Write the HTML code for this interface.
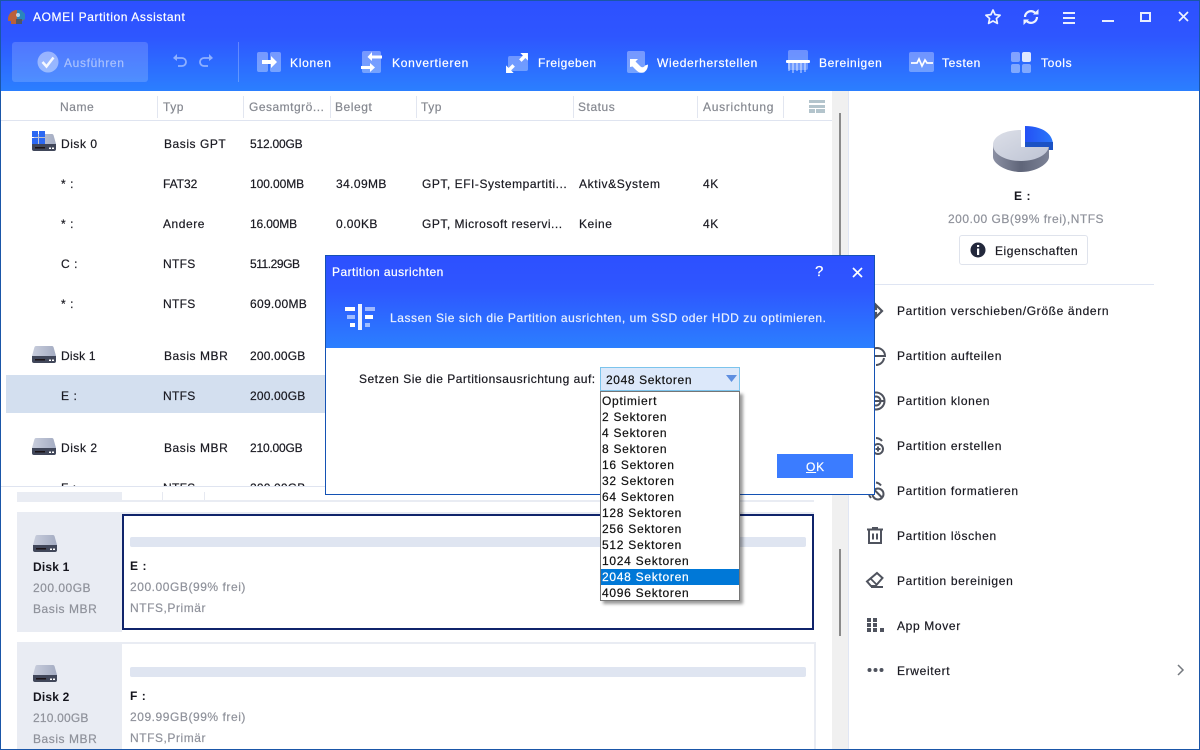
<!DOCTYPE html>
<html><head><meta charset="utf-8"><style>
html,body{margin:0;padding:0;width:1200px;height:750px;overflow:hidden;background:#fff}
*{box-sizing:border-box}
#r{position:relative;width:1200px;height:750px;overflow:hidden;font-family:"Liberation Sans",sans-serif;font-size:12px;color:#1a1a22;background:#fff}
.a{position:absolute}
.t{position:absolute;white-space:nowrap;line-height:16px;letter-spacing:.55px;-webkit-text-stroke:.2px}
.w{color:#fff}
.g{color:#8f929b}
.h{color:#858890}
.sep{position:absolute;top:96px;width:1px;height:22px;background:#e2e6f0}
.m{left:897px;letter-spacing:.65px}
.o{position:absolute;left:0;height:16px;width:138px;line-height:16px;padding-left:1px;white-space:nowrap;letter-spacing:.72px;color:#111;-webkit-text-stroke:.2px}
svg{position:absolute;overflow:visible}
</style></head><body><div id="r">

<div class="a" style="left:0;top:0;width:1200px;height:91px;background:linear-gradient(#2d50ff 0%,#2e56ff 40%,#2b7fff 100%)"></div>

<svg style="left:8px;top:9px" width="18" height="16" viewBox="0 0 18 16"><path d="M0 9C1 4 4 2 8 1h5l4 4v5l-4 3H8v2H3V12H0z" fill="#b9603a"/><path d="M9 1h4l4 4v5l-4 2H9z" fill="#2a86bd"/><path d="M8 10h6v5H8z" fill="#4d5766"/><circle cx="10" cy="6" r="2" fill="#cfeaf5" opacity=".8"/></svg>
<div class="t w" style="left:33px;top:9px;letter-spacing:.6px">AOMEI Partition Assistant</div>

<svg style="left:984px;top:8px" width="18" height="18" viewBox="0 0 18 18"><path d="M9 2l2.100 4.600 5 .6-3.700 3.300 1 4.900L9 13l-4.400 2.400 1-4.900L1.900 7.200l5-.6z" fill="none" stroke="#eef2ff" stroke-width="1.700" stroke-linejoin="round"/></svg>
<svg style="left:1022px;top:8px" width="18" height="18" viewBox="0 0 18 18"><path d="M3 9a6 6 0 0 1 10-4.300M15 9a6 6 0 0 1-10 4.300" fill="none" stroke="#eef2ff" stroke-width="2.200"/><path d="M11 6.500h5.500V1zM7 11.500H1.500V17z" fill="#eef2ff"/></svg>
<div class="a" style="left:1063px;top:12px;width:12px;height:2px;background:#e8edff"></div>
<div class="a" style="left:1063px;top:17px;width:12px;height:2px;background:#e8edff"></div>
<div class="a" style="left:1063px;top:22px;width:12px;height:2px;background:#e8edff"></div>
<div class="a" style="left:1102px;top:20px;width:12px;height:2px;background:#e8edff"></div>
<div class="a" style="left:1140px;top:12px;width:11px;height:10px;border:2px solid #e8edff"></div>
<svg style="left:1178px;top:11px" width="11" height="11" viewBox="0 0 11 11"><path d="M1 1l9 9M10 1l-9 9" stroke="#eef2ff" stroke-width="1.700"/></svg>

<div class="a" style="left:12px;top:42px;width:136px;height:40px;border-radius:3px;background:rgba(255,255,255,.17)"></div>
<svg style="left:37px;top:51px" width="22" height="22" viewBox="0 0 22 22"><circle cx="11" cy="11" r="10.500" fill="#fff" opacity=".42"/><path d="M5.500 11l4 4.500 7-9" fill="none" stroke="#fff" stroke-opacity=".9" stroke-width="2.500"/></svg>
<div class="t" style="left:64px;top:55px;color:#a9c1fd;letter-spacing:.65px">Ausführen</div>
<svg style="left:172px;top:54px" width="16" height="14" viewBox="0 0 16 14"><path d="M4 4h6a4 4 0 0 1 0 8H6" fill="none" stroke="#8fb0ff" stroke-width="1.800"/><path d="M5 0v7L1 4z" fill="#8fb0ff"/></svg>
<svg style="left:198px;top:54px" width="16" height="14" viewBox="0 0 16 14"><path d="M12 4H6a4 4 0 0 0 0 8h4" fill="none" stroke="#8fb0ff" stroke-width="1.800"/><path d="M11 0v7l4-3z" fill="#8fb0ff"/></svg>
<div class="a" style="left:238px;top:42px;width:1px;height:40px;background:rgba(255,255,255,.25)"></div>

<!-- Klonen -->
<div class="a" style="left:257px;top:52px;width:11px;height:20px;border-radius:2px;background:rgba(255,255,255,.35)"></div>
<div class="a" style="left:270px;top:52px;width:11px;height:20px;border-radius:2px;background:rgba(255,255,255,.35)"></div>
<svg style="left:262px;top:56px" width="16" height="12" viewBox="0 0 16 12"><path d="M0 4h9V0l6 6-6 6V8H0z" fill="#fff"/></svg>
<div class="t w" style="left:290px;top:55px;letter-spacing:.7px">Klonen</div>
<!-- Konvertieren -->
<div class="a" style="left:362px;top:51px;width:19px;height:22px;border-radius:2px;background:rgba(255,255,255,.35)"></div>
<svg style="left:361px;top:51px" width="21" height="22" viewBox="0 0 21 22"><path d="M21 4.500H11V1L6.500 6 11 10V7.500h10zM0 15h9v-3l5 4.500L9 21v-3H0z" fill="#fff"/></svg>
<div class="t w" style="left:392px;top:55px;letter-spacing:.75px">Konvertieren</div>
<!-- Freigeben -->
<div class="a" style="left:508px;top:56px;width:20px;height:15px;border-radius:2px;background:rgba(255,255,255,.32)"></div>
<svg style="left:506px;top:53px" width="22" height="20" viewBox="0 0 23 21"><path d="M23 0v8l-2.700-2.700-4 4-2.600-2.600 4-4L15 0zM0 21v-8l2.700 2.700 4-4 2.600 2.600-4 4L8 21z" fill="#fff"/></svg>
<div class="t w" style="left:538px;top:55px;letter-spacing:.5px">Freigeben</div>
<!-- Wiederherstellen -->
<div class="a" style="left:627px;top:51px;width:18px;height:22px;border-radius:2px;background:rgba(255,255,255,.35)"></div>
<svg style="left:629px;top:58px" width="20" height="16" viewBox="0 0 20 16"><path d="M1 1h8L6.500 3.500 11 8c2 2 4 1.500 5-.5l3-1c0 5-3 9-8 8-2-.4-3-1.500-7.500-6L1 9z" fill="#fff"/></svg>
<div class="t w" style="left:657px;top:55px;letter-spacing:.68px">Wiederherstellen</div>
<!-- Bereinigen -->
<div class="a" style="left:788px;top:50px;width:20px;height:20px;border-radius:2px;background:rgba(255,255,255,.3)"></div>
<div class="a" style="left:786px;top:60px;width:24px;height:3px;border-radius:1px;background:#fff"></div>
<svg style="left:788px;top:63px" width="20" height="11" viewBox="0 0 20 11"><path d="M1 0v8M5 0v10M9 0v8M13 0v10M17 0v9" stroke="#fff" stroke-opacity=".5" stroke-width="1.500"/></svg>
<div class="t w" style="left:819px;top:55px;letter-spacing:.6px">Bereinigen</div>
<!-- Testen -->
<div class="a" style="left:909px;top:52px;width:25px;height:20px;border-radius:2px;background:rgba(255,255,255,.32)"></div>
<svg style="left:911px;top:55px" width="22" height="14" viewBox="0 0 22 14"><path d="M0 8h6l2-4 3 7 3-6 2 3h6" fill="none" stroke="#fff" stroke-width="1.700"/></svg>
<div class="t w" style="left:942px;top:55px;letter-spacing:.6px">Testen</div>
<!-- Tools -->
<div class="a" style="left:1011px;top:52px;width:9px;height:10px;border-radius:2px;background:rgba(255,255,255,.4)"></div>
<div class="a" style="left:1022px;top:52px;width:9px;height:10px;border-radius:2px;background:rgba(255,255,255,.85)"></div>
<div class="a" style="left:1011px;top:64px;width:9px;height:9px;border-radius:2px;background:rgba(255,255,255,.4)"></div>
<div class="a" style="left:1022px;top:64px;width:9px;height:9px;border-radius:2px;background:rgba(255,255,255,.4)"></div>
<div class="t w" style="left:1041px;top:55px;letter-spacing:.65px">Tools</div>

<!-- table header -->
<div class="t h" style="left:60px;top:99px">Name</div>
<div class="sep" style="left:157px"></div><div class="t h" style="left:163px;top:99px">Typ</div>
<div class="sep" style="left:243px"></div><div class="t h" style="left:249px;top:99px;letter-spacing:.5px">Gesamtgrö...</div>
<div class="sep" style="left:330px"></div><div class="t h" style="left:335px;top:99px">Belegt</div>
<div class="sep" style="left:416px"></div><div class="t h" style="left:421px;top:99px">Typ</div>
<div class="sep" style="left:573px"></div><div class="t h" style="left:578px;top:99px">Status</div>
<div class="sep" style="left:697px"></div><div class="t h" style="left:703px;top:99px;letter-spacing:.7px">Ausrichtung</div>
<div class="sep" style="left:783px"></div>
<div class="a" style="left:809px;top:100px;width:16px;height:3px;background:#b3c4cc"></div>
<div class="a" style="left:809px;top:105px;width:16px;height:3px;background:#b3c4cc"></div>
<div class="a" style="left:809px;top:109px;width:6px;height:4px;background:#b3c4cc"></div>
<div class="a" style="left:816px;top:109px;width:9px;height:4px;background:#b3c4cc"></div>
<div class="a" style="left:1px;top:120px;width:831px;height:1px;background:#dfe4f0"></div>

<!-- scrollbar + right -->
<div class="a" style="left:832px;top:91px;width:16px;height:659px;background:#f0f0f0"></div>
<div class="a" style="left:839px;top:113px;width:2px;height:375px;background:#8a8a8a"></div>
<div class="a" style="left:839px;top:549px;width:2px;height:87px;background:#8a8a8a"></div>
<div class="a" style="left:848px;top:91px;width:1px;height:659px;background:#e0e6f4"></div>

<!-- selected row -->
<div class="a" style="left:6px;top:375px;width:826px;height:38px;background:#d3dfef"></div>

<!-- disk icons -->
<svg style="left:32px;top:134px" width="24" height="17" viewBox="0 0 24 17"><defs><linearGradient id="d" x1="0" y1="0" x2="1" y2="0"><stop offset="0" stop-color="#c9cedd"/><stop offset="1" stop-color="#a4acc2"/></linearGradient></defs><path d="M4 0h16q1 0 1.500 1L24 10v2H0v-2L2.500 1Q3 0 4 0z" fill="url(#d)"/><path d="M0 10h24v5q0 2-2 2H2q-2 0-2-2z" fill="#41475a"/><path d="M3 13h10v1.500H3z" fill="#1c1418"/><path d="M17 13.500h2v1.500h-2zM20 13.500h2v1.500h-2z" fill="#fff"/></svg>
<div class="a" style="left:32px;top:131px;width:6px;height:6px;background:#2c68f2"></div>
<div class="a" style="left:39px;top:131px;width:6px;height:6px;background:#2c68f2"></div>
<div class="a" style="left:32px;top:138px;width:6px;height:6px;background:#2c68f2"></div>
<div class="a" style="left:39px;top:138px;width:6px;height:6px;background:#2c68f2"></div>
<svg style="left:32px;top:346px" width="24" height="17" viewBox="0 0 24 17"><path d="M4 0h16q1 0 1.500 1L24 10v2H0v-2L2.500 1Q3 0 4 0z" fill="url(#d)"/><path d="M0 10h24v5q0 2-2 2H2q-2 0-2-2z" fill="#41475a"/><path d="M3 13h10v1.500H3z" fill="#1c1418"/><path d="M17 13.500h2v1.500h-2zM20 13.500h2v1.500h-2z" fill="#fff"/></svg>
<svg style="left:32px;top:438px" width="24" height="17" viewBox="0 0 24 17"><path d="M4 0h16q1 0 1.500 1L24 10v2H0v-2L2.500 1Q3 0 4 0z" fill="url(#d)"/><path d="M0 10h24v5q0 2-2 2H2q-2 0-2-2z" fill="#41475a"/><path d="M3 13h10v1.500H3z" fill="#1c1418"/><path d="M17 13.500h2v1.500h-2zM20 13.500h2v1.500h-2z" fill="#fff"/></svg>

<!-- rows -->
<div class="t" style="left:61px;top:136px">Disk 0</div><div class="t" style="left:164px;top:136px">Basis GPT</div><div class="t" style="left:250px;top:136px;letter-spacing:-.2px">512.00GB</div>
<div class="t" style="left:61px;top:176px">* :</div><div class="t" style="left:163px;top:176px;letter-spacing:-.05px">FAT32</div><div class="t" style="left:250px;top:176px;letter-spacing:-.08px">100.00MB</div><div class="t" style="left:336px;top:176px;letter-spacing:.4px">34.09MB</div><div class="t" style="left:422px;top:176px;letter-spacing:.53px">GPT, EFI-Systempartiti...</div><div class="t" style="left:579px;top:176px;letter-spacing:.63px">Aktiv&amp;System</div><div class="t" style="left:703px;top:176px">4K</div>
<div class="t" style="left:61px;top:216px">* :</div><div class="t" style="left:163px;top:216px">Andere</div><div class="t" style="left:250px;top:216px;letter-spacing:-.15px">16.00MB</div><div class="t" style="left:336px;top:216px;letter-spacing:.4px">0.00KB</div><div class="t" style="left:422px;top:216px;letter-spacing:.5px">GPT, Microsoft reservi...</div><div class="t" style="left:579px;top:216px">Keine</div><div class="t" style="left:703px;top:216px">4K</div>
<div class="t" style="left:61px;top:256px">C :</div><div class="t" style="left:163px;top:256px;letter-spacing:.3px">NTFS</div><div class="t" style="left:250px;top:256px;letter-spacing:-.45px">511.29GB</div>
<div class="t" style="left:61px;top:296px">* :</div><div class="t" style="left:163px;top:296px;letter-spacing:.3px">NTFS</div><div class="t" style="left:250px;top:296px;letter-spacing:.3px">609.00MB</div>
<div class="t" style="left:61px;top:348px;letter-spacing:.25px">Disk 1</div><div class="t" style="left:164px;top:348px">Basis MBR</div><div class="t" style="left:250px;top:348px;letter-spacing:.17px">200.00GB</div>
<div class="t" style="left:61px;top:388px">E :</div><div class="t" style="left:163px;top:388px;letter-spacing:.3px">NTFS</div><div class="t" style="left:250px;top:388px;letter-spacing:.17px">200.00GB</div>
<div class="t" style="left:61px;top:440px">Disk 2</div><div class="t" style="left:164px;top:440px">Basis MBR</div><div class="t" style="left:250px;top:440px;letter-spacing:-.2px">210.00GB</div>
<div class="t" style="left:61px;top:480px">F :</div><div class="t" style="left:163px;top:480px;letter-spacing:.3px">NTFS</div><div class="t" style="left:250px;top:480px;letter-spacing:.17px">200.00GB</div>

<!-- lower pane -->
<div class="a" style="left:1px;top:486px;width:831px;height:264px;background:#fff;border-top:1px solid #dfe4f0"></div>
<div class="a" style="left:17px;top:492px;width:105px;height:8px;background:#e9ecf3"></div>
<div class="a" style="left:17px;top:500px;width:797px;height:2px;background:#e9ecf3"></div>
<div class="a" style="left:162px;top:492px;width:1px;height:8px;background:#e6e9f1"></div>
<div class="a" style="left:204px;top:492px;width:1px;height:8px;background:#e6e9f1"></div>
<div class="a" style="left:17px;top:512px;width:105px;height:120px;background:#e9ecf3"></div>
<div class="a" style="left:122px;top:514px;width:692px;height:116px;border:2px solid #10246b;background:#fff"></div>
<div class="a" style="left:122px;top:512px;width:692px;height:2px;background:#e9ecf3"></div>
<div class="a" style="left:130px;top:537px;width:676px;height:10px;border-radius:2px;background:#dfe5f1"></div>
<svg style="left:33px;top:535px" width="24" height="17" viewBox="0 0 24 17"><path d="M4 0h16q1 0 1.500 1L24 10v2H0v-2L2.500 1Q3 0 4 0z" fill="url(#d)"/><path d="M0 10h24v5q0 2-2 2H2q-2 0-2-2z" fill="#41475a"/><path d="M3 13h10v1.500H3z" fill="#1c1418"/><path d="M17 13.500h2v1.500h-2zM20 13.500h2v1.500h-2z" fill="#fff"/></svg>
<div class="t" style="left:33px;top:559px;font-weight:bold;color:#14141c;letter-spacing:.2px;-webkit-text-stroke:0">Disk 1</div>
<div class="t g" style="left:33px;top:580px;letter-spacing:.5px">200.00GB</div>
<div class="t g" style="left:33px;top:601px">Basis MBR</div>
<div class="t" style="left:130px;top:558px;font-weight:bold;color:#14141c;-webkit-text-stroke:0">E :</div>
<div class="t g" style="left:130px;top:579px">200.00GB(99% frei)</div>
<div class="t g" style="left:130px;top:600px">NTFS,Primär</div>

<div class="a" style="left:17px;top:642px;width:105px;height:108px;background:#e9ecf3"></div>
<div class="a" style="left:122px;top:642px;width:693px;height:2px;background:#e9ecf3"></div>
<div class="a" style="left:814px;top:642px;width:2px;height:108px;background:#e9ecf3"></div>
<div class="a" style="left:130px;top:667px;width:676px;height:10px;border-radius:2px;background:#dfe5f1"></div>
<svg style="left:33px;top:665px" width="24" height="17" viewBox="0 0 24 17"><path d="M4 0h16q1 0 1.500 1L24 10v2H0v-2L2.500 1Q3 0 4 0z" fill="url(#d)"/><path d="M0 10h24v5q0 2-2 2H2q-2 0-2-2z" fill="#41475a"/><path d="M3 13h10v1.500H3z" fill="#1c1418"/><path d="M17 13.500h2v1.500h-2zM20 13.500h2v1.500h-2z" fill="#fff"/></svg>
<div class="t" style="left:33px;top:689px;font-weight:bold;color:#14141c;letter-spacing:.2px;-webkit-text-stroke:0">Disk 2</div>
<div class="t g" style="left:33px;top:710px;letter-spacing:.2px">210.00GB</div>
<div class="t g" style="left:33px;top:731px">Basis MBR</div>
<div class="t" style="left:130px;top:688px;font-weight:bold;color:#14141c;-webkit-text-stroke:0">F :</div>
<div class="t g" style="left:130px;top:709px">209.99GB(99% frei)</div>
<div class="t g" style="left:130px;top:730px">NTFS,Primär</div>

<!-- right panel -->
<svg style="left:990px;top:124px" width="66" height="50" viewBox="0 0 66 50"><defs><linearGradient id="p" x1="0" y1="0" x2="1" y2="1"><stop offset="0" stop-color="#dcdfe8"/><stop offset="1" stop-color="#bec4d4"/></linearGradient><linearGradient id="b" x1="0" y1="0" x2="1" y2="0"><stop offset="0" stop-color="#2450f5"/><stop offset="1" stop-color="#2a78fa"/></linearGradient><linearGradient id="s" x1="0" y1="0" x2="1" y2="0"><stop offset="0" stop-color="#8b90a3"/><stop offset=".5" stop-color="#5f6579"/><stop offset="1" stop-color="#7c8296"/></linearGradient></defs>
<path d="M3 21v12c0 6 12 15 28 15s28-9 28-15V21z" fill="url(#s)"/><path d="M31 6C15 6 3 12 3 21c0 9 12 16 28 16s28-7 28-16H31z" fill="url(#p)"/><path d="M35 2c15 0 27 6 28 18H35z" fill="url(#b)"/><path d="M35 18h28v8H59v-3H35z" fill="#1b52c4"/><path d="M31 2h4v21h-4z" fill="#fff"/></svg>
<div class="t" style="left:1014px;top:188px;font-weight:bold;color:#14141c;-webkit-text-stroke:0">E :</div>
<div class="t g" style="left:948px;top:211px;letter-spacing:.5px">200.00 GB(99% frei),NTFS</div>
<div class="a" style="left:959px;top:235px;width:129px;height:30px;border:1px solid #dfe3ec;border-radius:3px;background:#fff"></div>
<svg style="left:970px;top:242px" width="16" height="16" viewBox="0 0 16 16"><circle cx="8" cy="8" r="7.500" fill="#23283c"/><path d="M7 3h2.200v2H7zM7 6.500h2.200V13H7z" fill="#fff"/></svg>
<div class="t" style="left:995px;top:243px;letter-spacing:.55px">Eigenschaften</div>
<div class="a" style="left:865px;top:284px;width:289px;height:1px;background:#dfe5f3"></div>

<div class="t m" style="top:303px">Partition verschieben/Größe ändern</div>
<div class="t m" style="top:348px">Partition aufteilen</div>
<div class="t m" style="top:393px">Partition klonen</div>
<div class="t m" style="top:438px">Partition erstellen</div>
<div class="t m" style="top:483px">Partition formatieren</div>
<div class="t m" style="top:528px">Partition löschen</div>
<div class="t m" style="top:573px">Partition bereinigen</div>
<div class="t m" style="top:618px">App Mover</div>
<div class="t m" style="top:663px">Erweitert</div>

<svg style="left:867px;top:302px" width="18" height="18" viewBox="0 0 18 18" fill="none" stroke="#4f535e" stroke-width="2.200"><path d="M1 7h8V3l6 6-6 6v-4H1z"/></svg>
<svg style="left:866px;top:346px" width="20" height="20" viewBox="0 0 20 20" fill="none" stroke="#4f535e" stroke-width="2"><path d="M11 2a8 8 0 0 1 8 8H3a8 8 0 0 1 8-8zM18 12a8 8 0 0 1-8 7"/></svg>
<svg style="left:866px;top:391px" width="20" height="20" viewBox="0 0 20 20" fill="none" stroke="#4f535e" stroke-width="2"><circle cx="10" cy="10" r="8.500"/><circle cx="10" cy="10" r="4.500"/><path d="M2 10h16"/></svg>
<svg style="left:866px;top:436px" width="20" height="20" viewBox="0 0 20 20" fill="none" stroke="#4f535e" stroke-width="2"><path d="M10 2a8 8 0 0 1 6 3"/><circle cx="12" cy="13" r="5"/><path d="M12 10.500v5M9.500 13h5"/></svg>
<svg style="left:866px;top:481px" width="20" height="20" viewBox="0 0 20 20" fill="none" stroke="#4f535e" stroke-width="2"><path d="M10 1.500a8 8 0 0 1 5 3M3 14l2 3"/><circle cx="12" cy="13" r="5.500"/><path d="M8.500 9l7.500 7.500"/></svg>
<svg style="left:867px;top:527px" width="16" height="17" viewBox="0 0 16 17" fill="none" stroke="#4f535e"><path d="M0 2.500h16" stroke-width="2"/><path d="M5 1h6" stroke-width="2"/><path d="M2 3v13h12V3" stroke-width="2"/><path d="M6 6.500v6M10 6.500v6" stroke-width="2"/></svg>
<svg style="left:866px;top:572px" width="18" height="16" viewBox="0 0 18 16" fill="none" stroke="#4f535e" stroke-width="2"><path d="M11 1l5.500 5-7 8H5L1 9.500z"/><path d="M4 6l6 6" stroke-width="1.800"/><path d="M5 15h12"/></svg>
<svg style="left:867px;top:618px" width="17" height="14" viewBox="0 0 17 14" fill="#4f535e"><rect x="0" y="0" width="4" height="4"/><rect x="6" y="0" width="4" height="4"/><rect x="0" y="5" width="4" height="4"/><rect x="6" y="5" width="4" height="4"/><rect x="0" y="10" width="4" height="4"/><rect x="6" y="10" width="4" height="4"/><rect x="13" y="10" width="4" height="4"/></svg>
<svg style="left:867px;top:667px" width="17" height="6" viewBox="0 0 17 6" fill="#4f535e"><circle cx="2.500" cy="3" r="2"/><circle cx="8.500" cy="3" r="2"/><circle cx="14.500" cy="3" r="2"/></svg>
<svg style="left:1177px;top:664px" width="8" height="12" viewBox="0 0 8 12" fill="none" stroke="#75797f" stroke-width="1.500"><path d="M1 1l5 5-5 5"/></svg>

<!-- window border -->
<div class="a" style="left:0;top:0;width:1200px;height:750px;border:1px solid #1a56a8;pointer-events:none"></div>

<!-- dialog -->
<div class="a" style="left:325px;top:255px;width:550px;height:240px;background:#fff;border:1px solid #1452b4"></div>
<div class="a" style="left:326px;top:256px;width:548px;height:92px;background:linear-gradient(#2d50ff 0%,#2e56ff 35%,#2b7fff 100%)"></div>
<div class="t w" style="left:332px;top:264px;letter-spacing:.45px">Partition ausrichten</div>
<div class="t w" style="left:815px;top:264px;font-size:15px;letter-spacing:0">?</div>
<svg style="left:852px;top:267px" width="11" height="11" viewBox="0 0 11 11"><path d="M1 1l9 9M10 1l-9 9" stroke="#fff" stroke-width="1.700"/></svg>
<div class="a" style="left:345px;top:307px;width:10px;height:4px;background:#fff"></div>
<div class="a" style="left:347px;top:315px;width:8px;height:4px;background:rgba(255,255,255,.55)"></div>
<div class="a" style="left:350px;top:323px;width:5px;height:4px;background:#fff"></div>
<div class="a" style="left:358px;top:304px;width:4px;height:26px;background:rgba(255,255,255,.9)"></div>
<div class="a" style="left:365px;top:307px;width:10px;height:4px;background:rgba(255,255,255,.55)"></div>
<div class="a" style="left:365px;top:315px;width:8px;height:4px;background:#fff"></div>
<div class="a" style="left:365px;top:323px;width:5px;height:4px;background:rgba(255,255,255,.55)"></div>
<div class="t" style="left:390px;top:310px;color:#e9f0ff;letter-spacing:.56px">Lassen Sie sich die Partition ausrichten, um SSD oder HDD zu optimieren.</div>

<div class="t" style="left:359px;top:371px;letter-spacing:.5px">Setzen Sie die Partitionsausrichtung auf:</div>
<div class="a" style="left:600px;top:367px;width:140px;height:24px;background:#dce8fa;border:1px solid #7cc4ec"></div>
<div class="t" style="left:606px;top:372px;letter-spacing:.62px;color:#111">2048 Sektoren</div>
<svg style="left:726px;top:375px" width="11" height="7" viewBox="0 0 11 7"><path d="M0 0h11L5.500 7z" fill="#5e8ee0"/></svg>

<div class="a" style="left:777px;top:454px;width:76px;height:24px;background:#3b7cff"></div>
<div class="t w" style="left:806px;top:459px;letter-spacing:.8px"><u>O</u>K</div>

<div class="a" style="left:600px;top:391px;width:140px;height:210px;background:#fff;border:1px solid #767676;box-shadow:3px 3px 3px rgba(0,0,0,.4)">
<div class="o" style="top:1px">Optimiert</div>
<div class="o" style="top:17px">2 Sektoren</div>
<div class="o" style="top:33px">4 Sektoren</div>
<div class="o" style="top:49px">8 Sektoren</div>
<div class="o" style="top:65px">16 Sektoren</div>
<div class="o" style="top:81px">32 Sektoren</div>
<div class="o" style="top:97px">64 Sektoren</div>
<div class="o" style="top:113px">128 Sektoren</div>
<div class="o" style="top:129px">256 Sektoren</div>
<div class="o" style="top:145px">512 Sektoren</div>
<div class="o" style="top:161px">1024 Sektoren</div>
<div class="o" style="top:177px;background:#0078d7;color:#fff">2048 Sektoren</div>
<div class="o" style="top:193px">4096 Sektoren</div>
</div>

</div></body></html>
